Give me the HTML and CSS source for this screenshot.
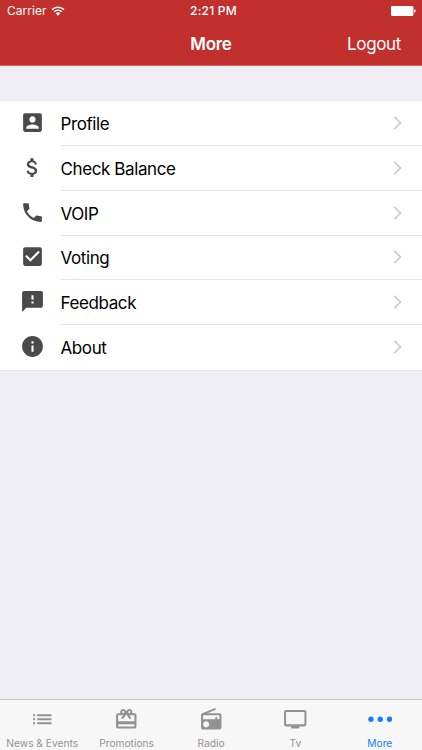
FILE: index.html
```
<!DOCTYPE html>
<html lang="en">
<head>
    <meta charset="UTF-8">
    <meta name="viewport" content="width=device-width, initial-scale=1.0">
    <title>More</title>
    <link rel="stylesheet" href="styles.css">
</head>
<body>
    <div class="screen">
        <header class="header">
            <div class="status">
                <div class="carrier">
                    <span>Carrier</span>
                    <svg class="wifi" viewBox="0 0 14 10">
                        <path d="M1 3.6a8.6 8.6 0 0 1 12 0M3.1 5.8a5.6 5.6 0 0 1 7.8 0" fill="none" stroke="#fff" stroke-width="1.5"/>
                        <path d="M4.8 7.4a3.2 3.2 0 0 1 4.4 0L7 9.7z" fill="#fff"/>
                    </svg>
                </div>
                <div class="time">2:21 PM</div>
                <div class="power">
                    <svg class="battery" viewBox="0 0 25 10">
                        <rect width="22.4" height="10" rx="1.3" fill="#fff"/>
                        <path d="M23.2 3.3q1.5.3 1.5 1.7t-1.5 1.7z" fill="#fff"/>
                    </svg>
                </div>
            </div>
            <div class="navbar">
                <h1 class="title">More</h1>
                <a class="logout">Logout</a>
            </div>
        </header>
        <main class="content">
            <ul class="menu">
                <li class="item">
                    <svg class="icon" viewBox="0 0 24 24"><path d="M3 5v14c0 1.100.89 2 2 2h14c1.100 0 2-.9 2-2V5c0-1.100-.9-2-2-2H5c-1.110 0-2 .9-2 2zm12 4c0 1.660-1.340 3-3 3s-3-1.340-3-3 1.340-3 3-3 3 1.340 3 3zm-9 8c0-2 4-3.100 6-3.100s6 1.100 6 3.100v1H6v-1z"/></svg>
                    <div class="label">Profile<svg class="chevron" viewBox="0 0 8 14"><path d="M.8.8 7 7 .8 13.200"/></svg></div>
                </li>
                <li class="item">
                    <svg class="icon" viewBox="0 0 24 24"><path d="M11.800 10.900c-2.270-.59-3-1.200-3-2.150 0-1.090 1.010-1.850 2.700-1.850 1.780 0 2.440.85 2.500 2.100h2.210c-.07-1.720-1.120-3.300-3.210-3.810V3h-3v2.160c-1.940.42-3.500 1.680-3.500 3.610 0 2.310 1.910 3.460 4.700 4.130 2.500.6 3 1.480 3 2.410 0 .69-.49 1.790-2.700 1.790-2.060 0-2.870-.92-2.980-2.100h-2.200c.12 2.190 1.760 3.420 3.680 3.830V21h3v-2.150c1.950-.37 3.500-1.500 3.500-3.550 0-2.840-2.430-3.810-4.700-4.400z"/></svg>
                    <div class="label">Check Balance<svg class="chevron" viewBox="0 0 8 14"><path d="M.8.8 7 7 .8 13.200"/></svg></div>
                </li>
                <li class="item">
                    <svg class="icon" viewBox="0 0 24 24"><path d="M6.620 10.790c1.440 2.830 3.760 5.140 6.590 6.590l2.200-2.200c.27-.27.67-.36 1.020-.24 1.120.37 2.330.57 3.570.57.55 0 1 .45 1 1V20c0 .55-.45 1-1 1-9.390 0-17-7.610-17-17 0-.55.45-1 1-1h3.500c.55 0 1 .45 1 1 0 1.250.2 2.450.57 3.570.11.35.03.74-.25 1.020l-2.200 2.200z"/></svg>
                    <div class="label">VOIP<svg class="chevron" viewBox="0 0 8 14"><path d="M.8.8 7 7 .8 13.200"/></svg></div>
                </li>
                <li class="item">
                    <svg class="icon" viewBox="0 0 24 24"><path d="M19 3H5c-1.110 0-2 .9-2 2v14c0 1.100.89 2 2 2h14c1.110 0 2-.9 2-2V5c0-1.100-.89-2-2-2zm-9 14l-5-5 1.410-1.410L10 14.170l7.590-7.590L19 8l-9 9z"/></svg>
                    <div class="label">Voting<svg class="chevron" viewBox="0 0 8 14"><path d="M.8.8 7 7 .8 13.200"/></svg></div>
                </li>
                <li class="item">
                    <svg class="icon" viewBox="0 0 24 24"><path d="M20 2H4c-1.100 0-1.990.9-1.990 2L2 22l4-4h14c1.100 0 2-.9 2-2V4c0-1.100-.9-2-2-2zm-7 12h-2v-2h2v2zm0-4h-2V6h2v4z"/></svg>
                    <div class="label">Feedback<svg class="chevron" viewBox="0 0 8 14"><path d="M.8.8 7 7 .8 13.200"/></svg></div>
                </li>
                <li class="item">
                    <svg class="icon" viewBox="0 0 24 24"><path d="M12 2C6.480 2 2 6.480 2 12s4.480 10 10 10 10-4.480 10-10S17.520 2 12 2zm1 15h-2v-6h2v6zm0-8h-2V7h2v2z"/></svg>
                    <div class="label">About<svg class="chevron" viewBox="0 0 8 14"><path d="M.8.8 7 7 .8 13.200"/></svg></div>
                </li>
            </ul>
        </main>
        <nav class="tabs">
            <a class="tab">
                <svg class="tab-icon" viewBox="0 0 24 24"><path d="M3 13h2v-2H3v2zm0 4h2v-2H3v2zm0-8h2V7H3v2zm4 4h14v-2H7v2zm0 4h14v-2H7v2zM7 7v2h14V7H7z"/></svg>
                <span>News &amp; Events</span>
            </a>
            <a class="tab">
                <svg class="tab-icon" viewBox="0 0 24 24"><path d="M20 6h-2.180c.11-.31.18-.65.18-1 0-1.660-1.340-3-3-3-1.050 0-1.960.54-2.500 1.350l-.5.67-.5-.68C10.960 2.540 10.050 2 9 2 7.340 2 6 3.340 6 5c0 .35.07.69.18 1H4c-1.110 0-1.990.89-1.990 2L2 19c0 1.110.89 2 2 2h16c1.110 0 2-.89 2-2V8c0-1.110-.89-2-2-2zm-5-2c.55 0 1 .45 1 1s-.45 1-1 1-1-.45-1-1 .45-1 1-1zM9 4c.55 0 1 .45 1 1s-.45 1-1 1-1-.45-1-1 .45-1 1-1zm11 15H4v-2h16v2zm0-5H4V8h5.080L7 10.830 8.620 12 11 8.760l1-1.360 1 1.360L15.380 12 17 10.830 14.920 8H20v6z"/></svg>
                <span>Promotions</span>
            </a>
            <a class="tab">
                <svg class="tab-icon" viewBox="0 0 24 24"><path d="M3.240 6.150C2.510 6.430 2 7.170 2 8v12c0 1.100.89 2 2 2h16c1.110 0 2-.9 2-2V8c0-1.110-.89-2-2-2H8.300l8.260-3.340L15.880 1 3.240 6.150zM7 20c-1.660 0-3-1.340-3-3s1.340-3 3-3 3 1.340 3 3-1.340 3-3 3zm13-8h-2v-2h-2v2H4V8h16v4z"/></svg>
                <span>Radio</span>
            </a>
            <a class="tab">
                <svg class="tab-icon" viewBox="0 0 24 24"><path d="M21 3H3c-1.100 0-2 .9-2 2v12c0 1.100.9 2 2 2h5v2h8v-2h5c1.100 0 1.990-.9 1.990-2L23 5c0-1.100-.9-2-2-2zm0 14H3V5h18v12z"/></svg>
                <span>Tv</span>
            </a>
            <a class="tab active">
                <svg class="tab-icon" viewBox="0 0 24 24"><circle cx="2.900" cy="12" r="2.600"/><circle cx="12" cy="12" r="2.600"/><circle cx="21.100" cy="12" r="2.600"/></svg>
                <span>More</span>
            </a>
        </nav>
    </div>
</body>
</html>
```
FILE: styles.css
```
*{
    box-sizing: border-box;
}
body{
    margin: 0;
    font-family: Inter, "Liberation Sans", sans-serif;
    background: #efeef4;
}
.screen{
    display: flex;
    flex-direction: column;
    height: 750px;
    width: 422px;
    overflow: hidden;
}
.header{
    background: #c1302d;
    border-bottom: 1px solid #cf6668;
    color: #fff;
    height: 66px;
}
.status{
    display: grid;
    grid-template-columns: 1fr auto 1fr;
    align-items: center;
    height: 21px;
    padding: 0 6px 0 7px;
    font-size: 12px;
}
.carrier{
    display: flex;
    align-items: center;
    gap: 4px;
    letter-spacing: 0.05px;
}
.wifi{
    height: 10px;
    width: 14px;
}
.time{
    padding-left: 4px;
    font-weight: 500;
    letter-spacing: 0.25px;
}
.power{
    display: flex;
    justify-content: flex-end;
}
.battery{
    height: 10px;
    width: 25px;
}
.navbar{
    display: grid;
    grid-template-columns: 1fr auto 1fr;
    align-items: center;
    height: 45px;
    padding: 0 21px;
}
.title{
    grid-column: 2;
    margin: 0;
    font-size: 17px;
    font-weight: 600;
    letter-spacing: -0.3px;
}
.logout{
    justify-self: end;
    font-size: 17px;
    letter-spacing: -0.35px;
}
.content{
    flex: 1;
    padding-top: 35.3px;
}
.menu{
    list-style: none;
    margin: 0;
    padding: 0;
    background: #fff;
    box-shadow: 0 -1px #e7e6eb, 0 1px #e2e1e7;
}
.item{
    display: flex;
    align-items: center;
    height: 44.75px;
    padding-left: 20px;
}
.icon{
    fill: #4a4a4a;
    height: 25px;
    width: 25px;
    margin: 0 15.5px 2px 0;
}
.label{
    flex: 1;
    display: flex;
    align-items: center;
    justify-content: space-between;
    height: 100%;
    padding: 2px 20px 0 0;
    border-bottom: 1px solid #e5e4e8;
    font-size: 17px;
    letter-spacing: -0.4px;
}
.item:last-child .label{
    border-bottom-color: transparent;
}
.chevron{
    fill: none;
    stroke: #c7c7cc;
    stroke-width: 1.6;
    height: 14px;
    width: 9px;
    margin-bottom: 2px;
}
.tabs{
    display: grid;
    grid-template-columns: repeat(5, 1fr);
    height: 51px;
    background: #f7f7f8;
    border-top: 1px solid #c3c3c6;
}
.tab{
    display: flex;
    flex-direction: column;
    align-items: center;
    padding-top: 6.5px;
    color: #929292;
    font-size: 10.2px;
    line-height: 13px;
    white-space: nowrap;
}
.tab-icon{
    fill: currentColor;
    height: 24.5px;
    width: 24.5px;
    margin-bottom: 5.5px;
}
.active{
    color: #157efb;
}
```
